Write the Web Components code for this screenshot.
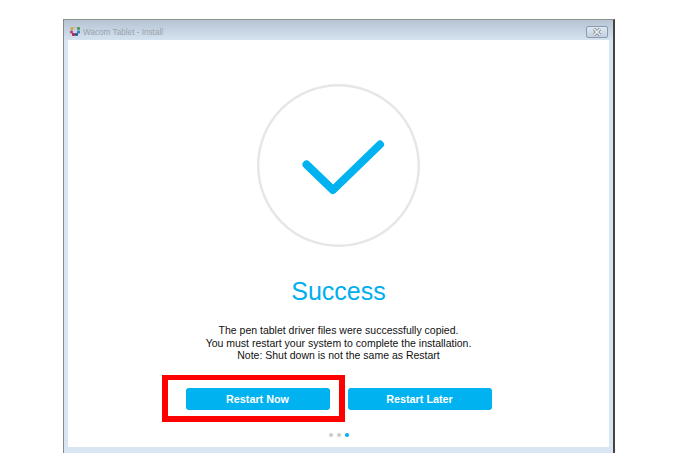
<!DOCTYPE html>
<html>
<head>
<meta charset="utf-8">
<title>Wacom Tablet - Install</title>
<style>
  html, body { margin: 0; background: #fff; }
  body { width: 680px; height: 471px; overflow: hidden; font-family: "Liberation Sans", Arial, sans-serif; }
</style>
</head>
<body>
<win-frame title-text="Wacom Tablet - Install">
  <success-icon></success-icon>
  <h-title>Success</h-title>
  <note-text>
    The pen tablet driver files were successfully copied.<br>
    You must restart your system to complete the installation.<br>
    Note: Shut down is not the same as Restart
  </note-text>
  <action-row>
    <blue-button highlight>Restart Now</blue-button>
    <blue-button>Restart Later</blue-button>
  </action-row>
  <step-dots></step-dots>
</win-frame>

<script>
class WinFrame extends HTMLElement {
  constructor() {
    super();
    this.attachShadow({ mode: 'open' });
  }

  connectedCallback() {
    const title = this.getAttribute('title-text') || '';
    this.shadowRoot.innerHTML = `
      <style>
        :host {
          display: flex;
          flex-direction: column;
          box-sizing: border-box;
          width: 552px;
          height: 434px;
          margin: 19px 0 0 63px;
          border-top: 1px solid #8f8f8f;
          border-left: 1px solid #8a8a8a;
          border-right: 2px solid #444;
          background: #d9e5f3;
        }
        .bar {
          display: flex;
          align-items: center;
          height: 20px;
          padding: 0 5px 0 6px;
          background: linear-gradient(#b6c4d3, #d5e2f0);
        }
        .logo { width: 10px; height: 10px; margin: 2px 3px 0 0; }
        .name { flex: 1; margin-top: 4px; font-size: 8.200px; color: #9aa3ad; }
        .close {
          display: flex;
          align-items: center;
          justify-content: center;
          box-sizing: border-box;
          width: 22px;
          height: 12px;
          margin-top: 4px;
          border: 1px solid #8a9bb0;
          border-radius: 2px;
          background: linear-gradient(#dfe7f0, #c3d0df);
        }
        .client {
          display: flex;
          flex-direction: column;
          align-items: center;
          height: 407px;
          margin: 0 4px 0 4px;
          background: #fff;
        }
      </style>
      <div class="bar">
        <svg class="logo" viewBox="0 0 10 10">
          <rect x="0.500" y="1" width="3" height="3" rx="1" fill="#d0a848"/>
          <rect x="3.500" y="0" width="3" height="3" rx="1" fill="#c4c4c4"/>
          <rect x="7" y="1" width="3" height="3" rx="1" fill="#4c9a58"/>
          <rect x="0" y="4.500" width="3" height="3" rx="1" fill="#b8437a"/>
          <rect x="7" y="4.500" width="3" height="3" rx="1" fill="#3a7cc0"/>
          <rect x="2" y="7" width="3" height="3" rx="1" fill="#a9254f"/>
          <rect x="5" y="7" width="3" height="3" rx="1" fill="#2d5a92"/>
        </svg>
        <span class="name">${title}</span>
        <span class="close">
          <svg width="10" height="8" viewBox="0 0 10 8">
            <path d="M2 1 L8 7 M8 1 L2 7" stroke="#6f7986" stroke-width="3"/>
            <path d="M2 1 L8 7 M8 1 L2 7" stroke="#f4f4f4" stroke-width="1.600"/>
          </svg>
        </span>
      </div>
      <div class="client"><slot></slot></div>
    `;
  }
}

class SuccessIcon extends HTMLElement {
  constructor() {
    super();
    this.attachShadow({ mode: 'open' });
    this.shadowRoot.innerHTML = `
      <style>
        :host { display: block; width: 163px; height: 163px; margin-top: 44px; }
        svg { display: block; }
      </style>
      <svg width="163" height="163" viewBox="0 0 163 163">
        <circle cx="81.500" cy="81.500" r="80.300" fill="none" stroke="#e6e6e6" stroke-width="2.400"/>
        <path d="M49.500 80.500 L76 106 L123 60.500" fill="none" stroke="#00b2f0" stroke-width="8" stroke-linecap="round" stroke-linejoin="round"/>
      </svg>
    `;
  }
}

class HTitle extends HTMLElement {
  constructor() {
    super();
    this.attachShadow({ mode: 'open' });
    this.shadowRoot.innerHTML = `
      <style>
        :host { display: block; margin-top: 29px; font-size: 25px; line-height: 30px; color: #00aeef; }
      </style>
      <slot></slot>
    `;
  }
}

class NoteText extends HTMLElement {
  constructor() {
    super();
    this.attachShadow({ mode: 'open' });
    this.shadowRoot.innerHTML = `
      <style>
        :host { display: block; margin-top: 18px; font-size: 10.500px; line-height: 12.500px; color: #111; text-align: center; }
      </style>
      <slot></slot>
    `;
  }
}

class ActionRow extends HTMLElement {
  constructor() {
    super();
    this.attachShadow({ mode: 'open' });
    this.shadowRoot.innerHTML = `
      <style>
        :host { display: flex; gap: 18px; margin-top: 26px; }
      </style>
      <slot></slot>
    `;
  }
}

class BlueButton extends HTMLElement {
  constructor() {
    super();
    this.attachShadow({ mode: 'open' });
    this.shadowRoot.innerHTML = `
      <style>
        :host {
          position: relative;
          display: flex;
          align-items: center;
          justify-content: center;
          width: 144px;
          height: 22px;
          border-radius: 3px;
          background: #00b2f0;
          color: #fff;
          font-size: 10.800px;
          font-weight: bold;
        }
        .mark {
          display: none;
          position: absolute;
          left: -24px;
          top: -13px;
          width: 183px;
          height: 47px;
          box-sizing: border-box;
          border: 6px solid #f00;
          border-top-width: 5px;
        }
        :host([highlight]) .mark { display: block; }
      </style>
      <slot></slot>
      <span class="mark"></span>
    `;
  }
}

class StepDots extends HTMLElement {
  constructor() {
    super();
    this.attachShadow({ mode: 'open' });
    this.shadowRoot.innerHTML = `
      <style>
        :host { display: flex; gap: 4px; margin-top: 23px; }
        i { width: 4px; height: 4px; border-radius: 50%; background: #ccc; }
        i:last-child { background: #00aeef; }
      </style>
      <i></i><i></i><i></i>
    `;
  }
}

customElements.define('win-frame', WinFrame);
customElements.define('success-icon', SuccessIcon);
customElements.define('h-title', HTitle);
customElements.define('note-text', NoteText);
customElements.define('action-row', ActionRow);
customElements.define('blue-button', BlueButton);
customElements.define('step-dots', StepDots);
</script>
</body>
</html>
